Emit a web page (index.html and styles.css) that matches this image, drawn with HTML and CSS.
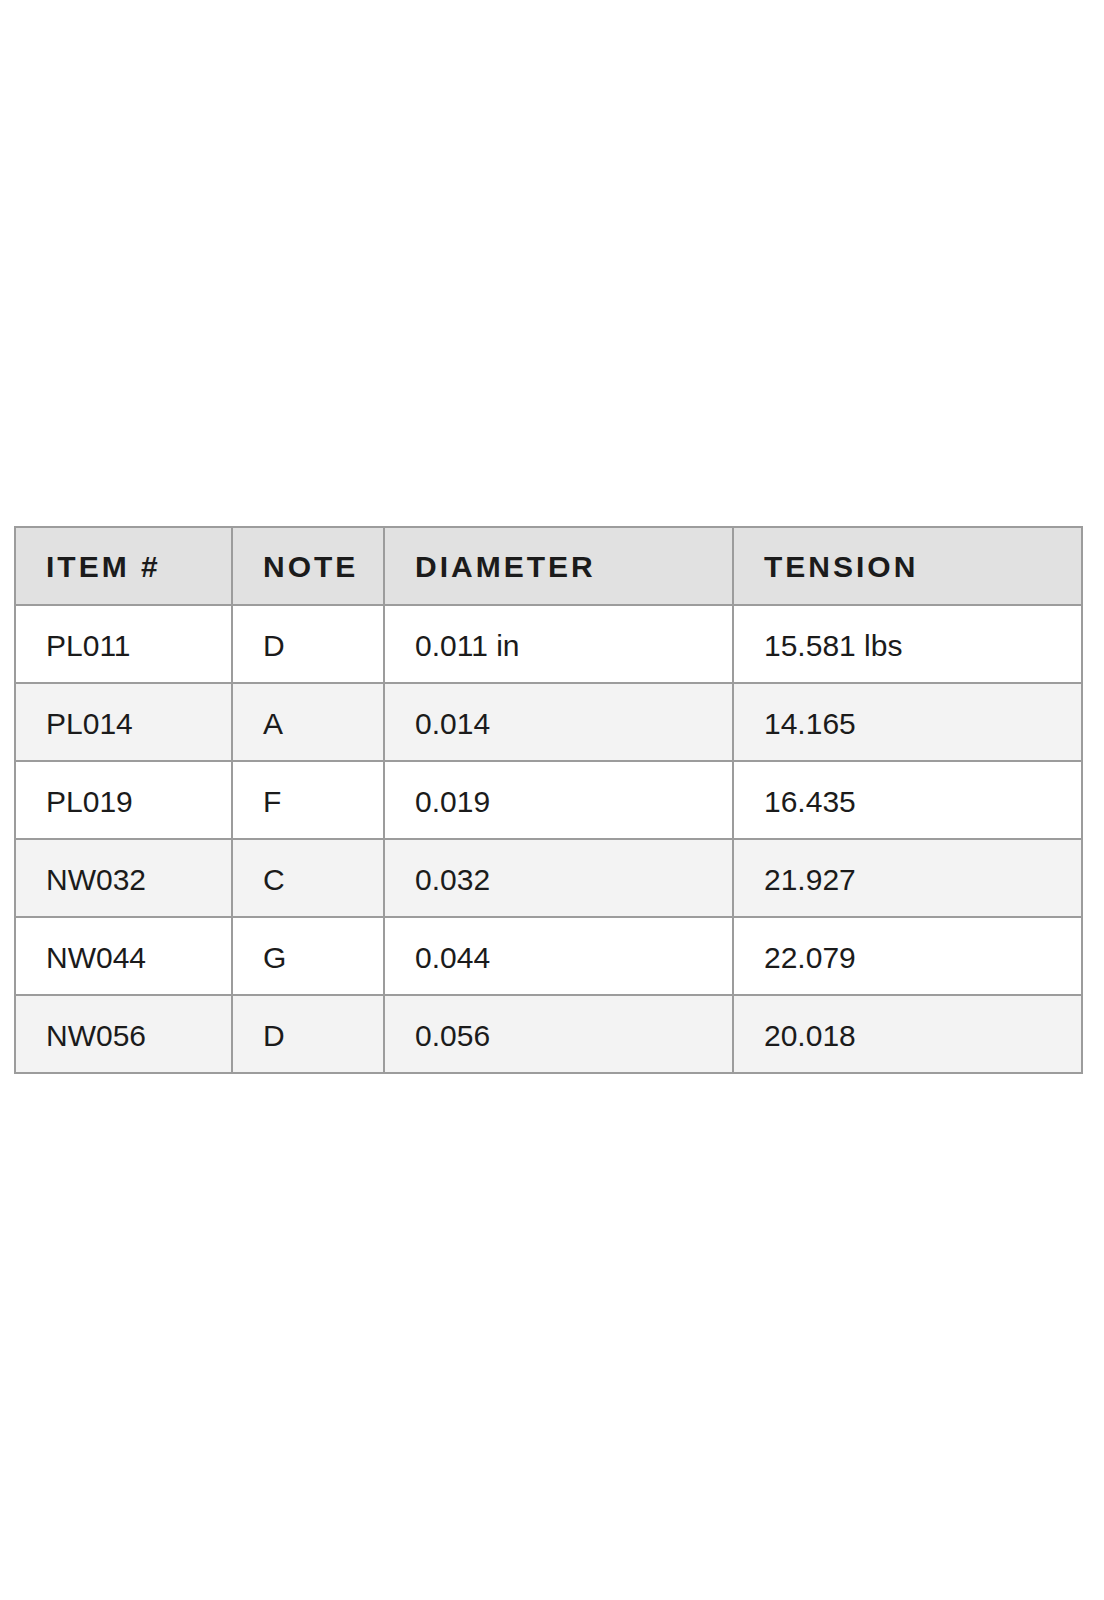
FILE: index.html
```html
<!DOCTYPE html>
<html lang="en">
<head>
<meta charset="utf-8">
<title>Wire table</title>
<link rel="stylesheet" href="styles.css">
</head>
<body>
<main class="page">
  <table class="spec">
    <colgroup>
      <col class="c-item">
      <col class="c-note">
      <col class="c-diam">
      <col class="c-tens">
    </colgroup>
    <thead>
      <tr><th>ITEM #</th><th>NOTE</th><th>DIAMETER</th><th>TENSION</th></tr>
    </thead>
    <tbody>
      <tr><td>PL011</td><td>D</td><td>0.011 in</td><td>15.581 lbs</td></tr>
      <tr><td>PL014</td><td>A</td><td>0.014</td><td>14.165</td></tr>
      <tr><td>PL019</td><td>F</td><td>0.019</td><td>16.435</td></tr>
      <tr><td>NW032</td><td>C</td><td>0.032</td><td>21.927</td></tr>
      <tr><td>NW044</td><td>G</td><td>0.044</td><td>22.079</td></tr>
      <tr><td>NW056</td><td>D</td><td>0.056</td><td>20.018</td></tr>
    </tbody>
  </table>
</main>
</body>
</html>
```

FILE: styles.css
```css
html, body {
  margin: 0;
  padding: 0;
  background: #ffffff;
}

.page {
  min-height: 1600px;
  display: flex;
  align-items: center;
  padding-left: 14px;
  box-sizing: border-box;
  font-family: "Liberation Sans", Arial, sans-serif;
  color: #1b1b1b;
}

.spec {
  border-collapse: collapse;
  table-layout: fixed;
  width: 1069px;
}

.c-item { width: 217px; }
.c-note { width: 152px; }
.c-diam { width: 349px; }
.c-tens { width: 349px; }

.spec th,
.spec td {
  border: 2px solid #9c9c9c;
  height: 78px;
  padding: 0 0 0 30px;
  text-align: left;
  vertical-align: middle;
  box-sizing: border-box;
}

.spec th {
  background: #e1e1e1;
  font-size: 30px;
  font-weight: 700;
  letter-spacing: 3px;
  padding-top: 2px;
}

.spec td {
  font-size: 30px;
  font-weight: 400;
  letter-spacing: 0;
  padding-top: 4px;
  background: #ffffff;
}

.spec tbody tr:nth-child(even) td {
  background: #f3f3f3;
}
```
